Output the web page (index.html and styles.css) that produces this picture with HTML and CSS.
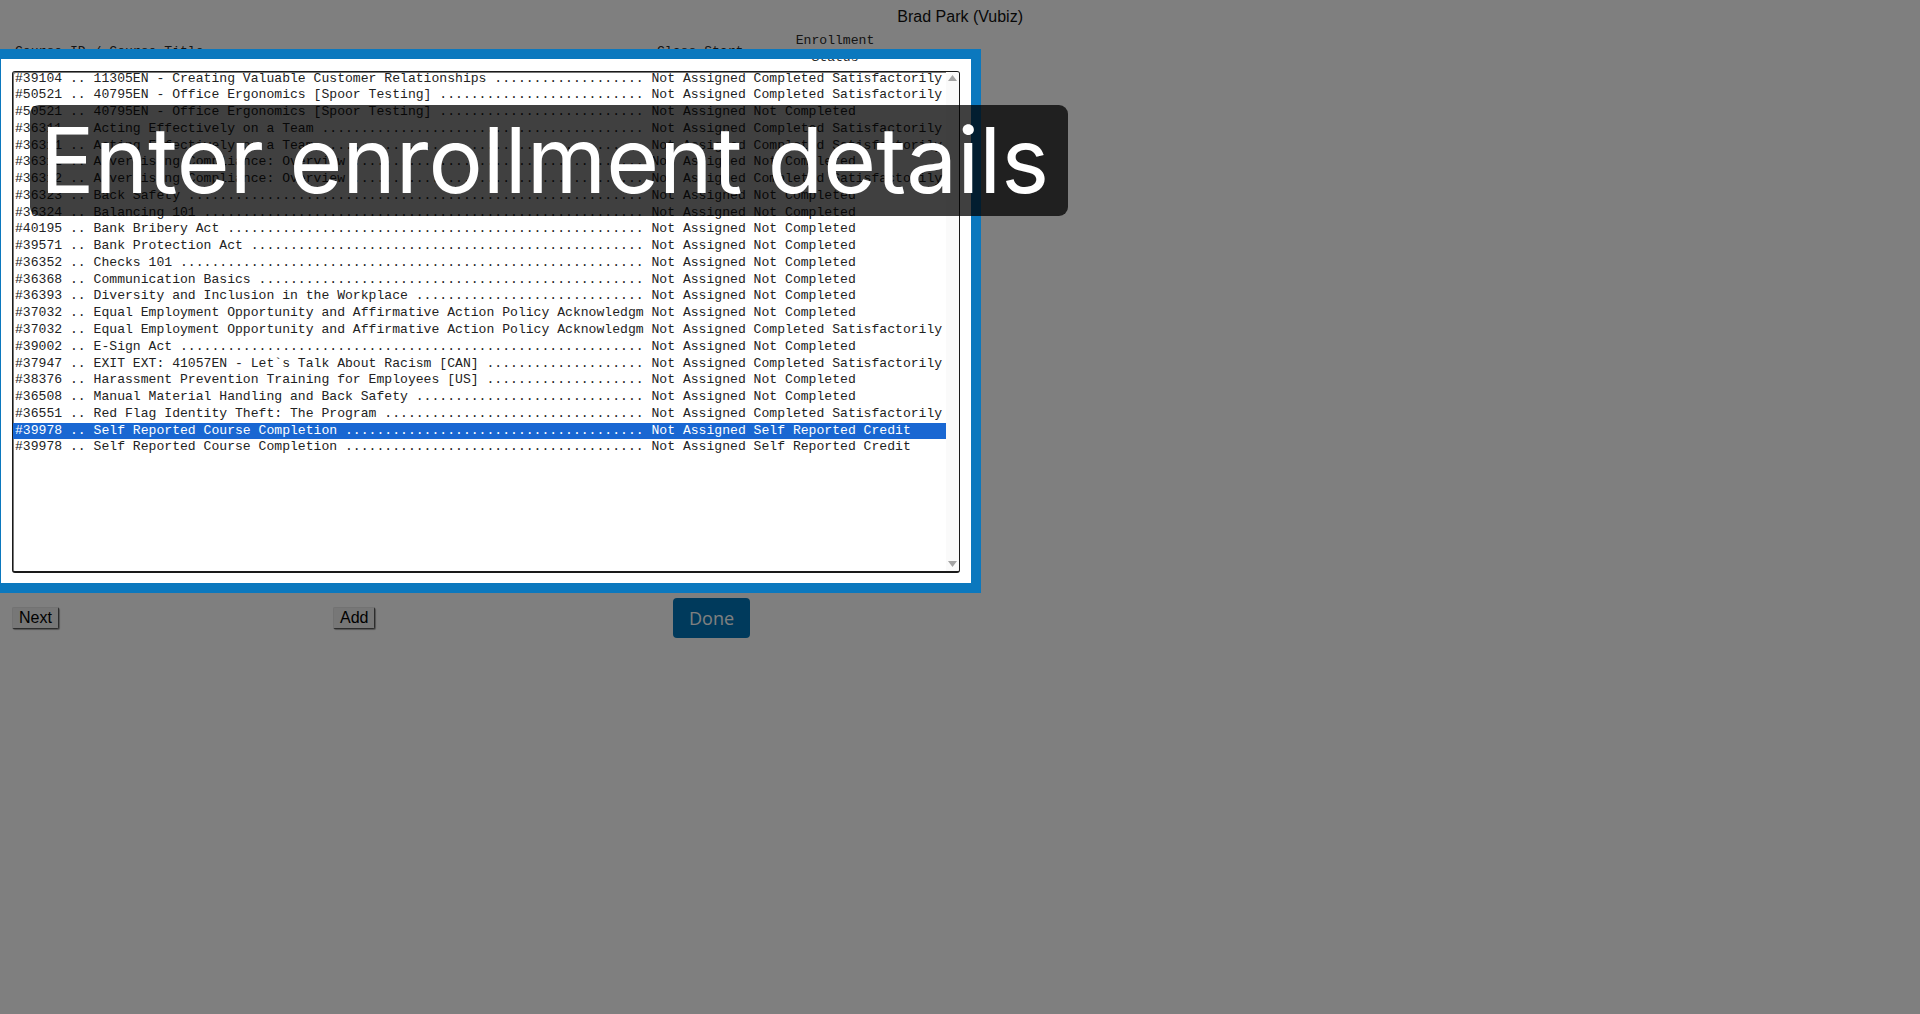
FILE: index.html
```html
<!DOCTYPE html>
<html lang="en">
<head>
<meta charset="utf-8">
<title>Enrollment</title>
<link rel="stylesheet" href="styles.css">
</head>
<body>
<div class="page">
  <div class="user">Brad Park (Vubiz)</div>
  <div class="colhead">
    <div class="ch c1">Course ID / Course Title</div>
    <div class="ch c2">Class Start</div>
    <div class="ch c3">Enrollment<br>Status</div>
  </div>
  <div class="listbox">
    <div class="opts">
      <div class="opt"><span class="t">#39104 .. 11305EN - Creating Valuable Customer Relationships ..............................</span> Not Assigned Completed Satisfactorily</div>
      <div class="opt"><span class="t">#50521 .. 40795EN - Office Ergonomics [Spoor Testing] ........................................</span> Not Assigned Completed Satisfactorily</div>
      <div class="opt"><span class="t">#50521 .. 40795EN - Office Ergonomics [Spoor Testing] ........................................</span> Not Assigned Not Completed</div>
      <div class="opt"><span class="t">#36311 .. Acting Effectively on a Team ............................................................</span> Not Assigned Completed Satisfactorily</div>
      <div class="opt"><span class="t">#36311 .. Acting Effectively on a Team ............................................................</span> Not Assigned Completed Satisfactorily</div>
      <div class="opt"><span class="t">#36312 .. Advertising Compliance: Overview ............................................................</span> Not Assigned Not Completed</div>
      <div class="opt"><span class="t">#36312 .. Advertising Compliance: Overview ............................................................</span> Not Assigned Completed Satisfactorily</div>
      <div class="opt"><span class="t">#36323 .. Back Safety ..........................................................................</span> Not Assigned Not Completed</div>
      <div class="opt"><span class="t">#36324 .. Balancing 101 ..........................................................................</span> Not Assigned Not Completed</div>
      <div class="opt"><span class="t">#40195 .. Bank Bribery Act ..........................................................................</span> Not Assigned Not Completed</div>
      <div class="opt"><span class="t">#39571 .. Bank Protection Act ..........................................................................</span> Not Assigned Not Completed</div>
      <div class="opt"><span class="t">#36352 .. Checks 101 ..........................................................................</span> Not Assigned Not Completed</div>
      <div class="opt"><span class="t">#36368 .. Communication Basics ..........................................................................</span> Not Assigned Not Completed</div>
      <div class="opt"><span class="t">#36393 .. Diversity and Inclusion in the Workplace ..................................................</span> Not Assigned Not Completed</div>
      <div class="opt"><span class="t">#37032 .. Equal Employment Opportunity and Affirmative Action Policy Acknowledgm</span> Not Assigned Not Completed</div>
      <div class="opt"><span class="t">#37032 .. Equal Employment Opportunity and Affirmative Action Policy Acknowledgm</span> Not Assigned Completed Satisfactorily</div>
      <div class="opt"><span class="t">#39002 .. E-Sign Act ..........................................................................</span> Not Assigned Not Completed</div>
      <div class="opt"><span class="t">#37947 .. EXIT EXT: 41057EN - Let`s Talk About Racism [CAN] ..........................................</span> Not Assigned Completed Satisfactorily</div>
      <div class="opt"><span class="t">#38376 .. Harassment Prevention Training for Employees [US] ..........................................</span> Not Assigned Not Completed</div>
      <div class="opt"><span class="t">#36508 .. Manual Material Handling and Back Safety ..................................................</span> Not Assigned Not Completed</div>
      <div class="opt"><span class="t">#36551 .. Red Flag Identity Theft: The Program ..................................................</span> Not Assigned Completed Satisfactorily</div>
      <div class="opt sel"><span class="t">#39978 .. Self Reported Course Completion ..................................................</span> Not Assigned Self Reported Credit</div>
      <div class="opt"><span class="t">#39978 .. Self Reported Course Completion ..................................................</span> Not Assigned Self Reported Credit</div>
    </div>
    <div class="sbar">
      <svg class="arr" width="9" height="6" viewBox="0 0 9 6"><path d="M4.5 0 L9 6 L0 6 Z" fill="#a3a3a3"/></svg>
      <svg class="arr" width="9" height="6" viewBox="0 0 9 6"><path d="M0 0 L9 0 L4.5 6 Z" fill="#a3a3a3"/></svg>
    </div>
  </div>
  <div class="actions">
    <button class="btn">Next</button>
    <button class="btn">Add</button>
    <button class="done">Done</button>
  </div>
</div>
<div class="spot"></div>
<div class="tip">Enter enrollment details</div>
</body>
</html>
```
FILE: styles.css
```css
html, body {
  margin: 0;
  padding: 0;
}
body {
  background: #ffffff;
  font-family: "Liberation Sans", Arial, sans-serif;
  color: #000;
  overflow: hidden;
  height: 1014px;
}
.page {
  position: relative;
}
.user {
  width: 1023px;
  text-align: right;
  font-size: 16px;
  line-height: 18px;
  padding-top: 8px;
  color: #111;
}
.colhead {
  display: grid;
  grid-template-columns: 642px 138px 80px;
  padding-left: 15px;
  margin-top: 4px;
  font-family: "Liberation Mono", "Courier New", monospace;
  font-size: 13.1px;
  line-height: 17px;
  color: #2a2a2a;
  align-items: center;
}
.c1, .c2 {
  padding-top: 7px;
}
.c3 {
  padding-top: 2px;
  text-align: center;
}
.listbox {
  margin: 5px 0 0 12px;
  width: 948px;
  height: 502px;
  box-sizing: border-box;
  border: 1px solid #1a1a1a;
  border-bottom-width: 2px;
  border-radius: 3px;
  box-shadow: inset 1px 1px 0 #777;
  background: #fff;
  display: flex;
  overflow: hidden;
}
.opts {
  flex: 1;
  margin-top: -1.5px;
}
.opt {
  font-family: "Liberation Mono", "Courier New", monospace;
  font-size: 13.1px;
  line-height: 16.77px;
  height: 16.77px;
  padding-left: 2px;
  white-space: pre;
  color: #222;
  overflow: hidden;
}
.opt .t {
  display: inline-block;
  width: 80ch;
  overflow: hidden;
  white-space: pre;
  vertical-align: top;
}
.opt.sel {
  background: #1967d2;
  color: #fff;
}
.sbar {
  width: 13px;
  background: #fafafa;
  display: flex;
  flex-direction: column;
  justify-content: space-between;
  align-items: center;
  padding: 3px 0 4px;
}
.arr {
  display: block;
}
.actions {
  display: grid;
  grid-template-columns: 321px 340px auto;
  align-items: center;
  padding-left: 12px;
  margin-top: 25px;
  height: 40px;
}
.btn {
  justify-self: start;
  font-family: "Liberation Sans", Arial, sans-serif;
  font-size: 16px;
  line-height: 18px;
  padding: 1px 6px;
  color: #000;
  background: #efefef;
  border: 1px solid;
  border-color: #e4e4e4 #5a5a5a #5a5a5a #e4e4e4;
  border-radius: 2px;
  box-shadow: 1px 1px 1px rgba(0, 0, 0, 0.35);
}
.done {
  justify-self: start;
  font-family: "Open Sans", sans-serif;
  font-size: 18px;
  height: 40px;
  line-height: 40px;
  padding: 0 16px;
  color: #fff;
  background: #0075b8;
  border: 0;
  border-radius: 4px;
}
.spot {
  position: absolute;
  left: 1px;
  top: 59px;
  width: 970px;
  height: 524px;
  box-shadow: 0 0 0 10px #0b78be, 0 0 0 3000px rgba(0, 0, 0, 0.5);
  pointer-events: none;
}
.tip {
  position: absolute;
  left: 30px;
  top: 105px;
  padding: 1px 19px 1px 10px;
  background: rgba(0, 0, 0, 0.75);
  color: #fff;
  font-family: Inter, "Noto Sans", sans-serif;
  font-size: 90.7px;
  line-height: 109px;
  border-radius: 9px;
  white-space: nowrap;
}
```
